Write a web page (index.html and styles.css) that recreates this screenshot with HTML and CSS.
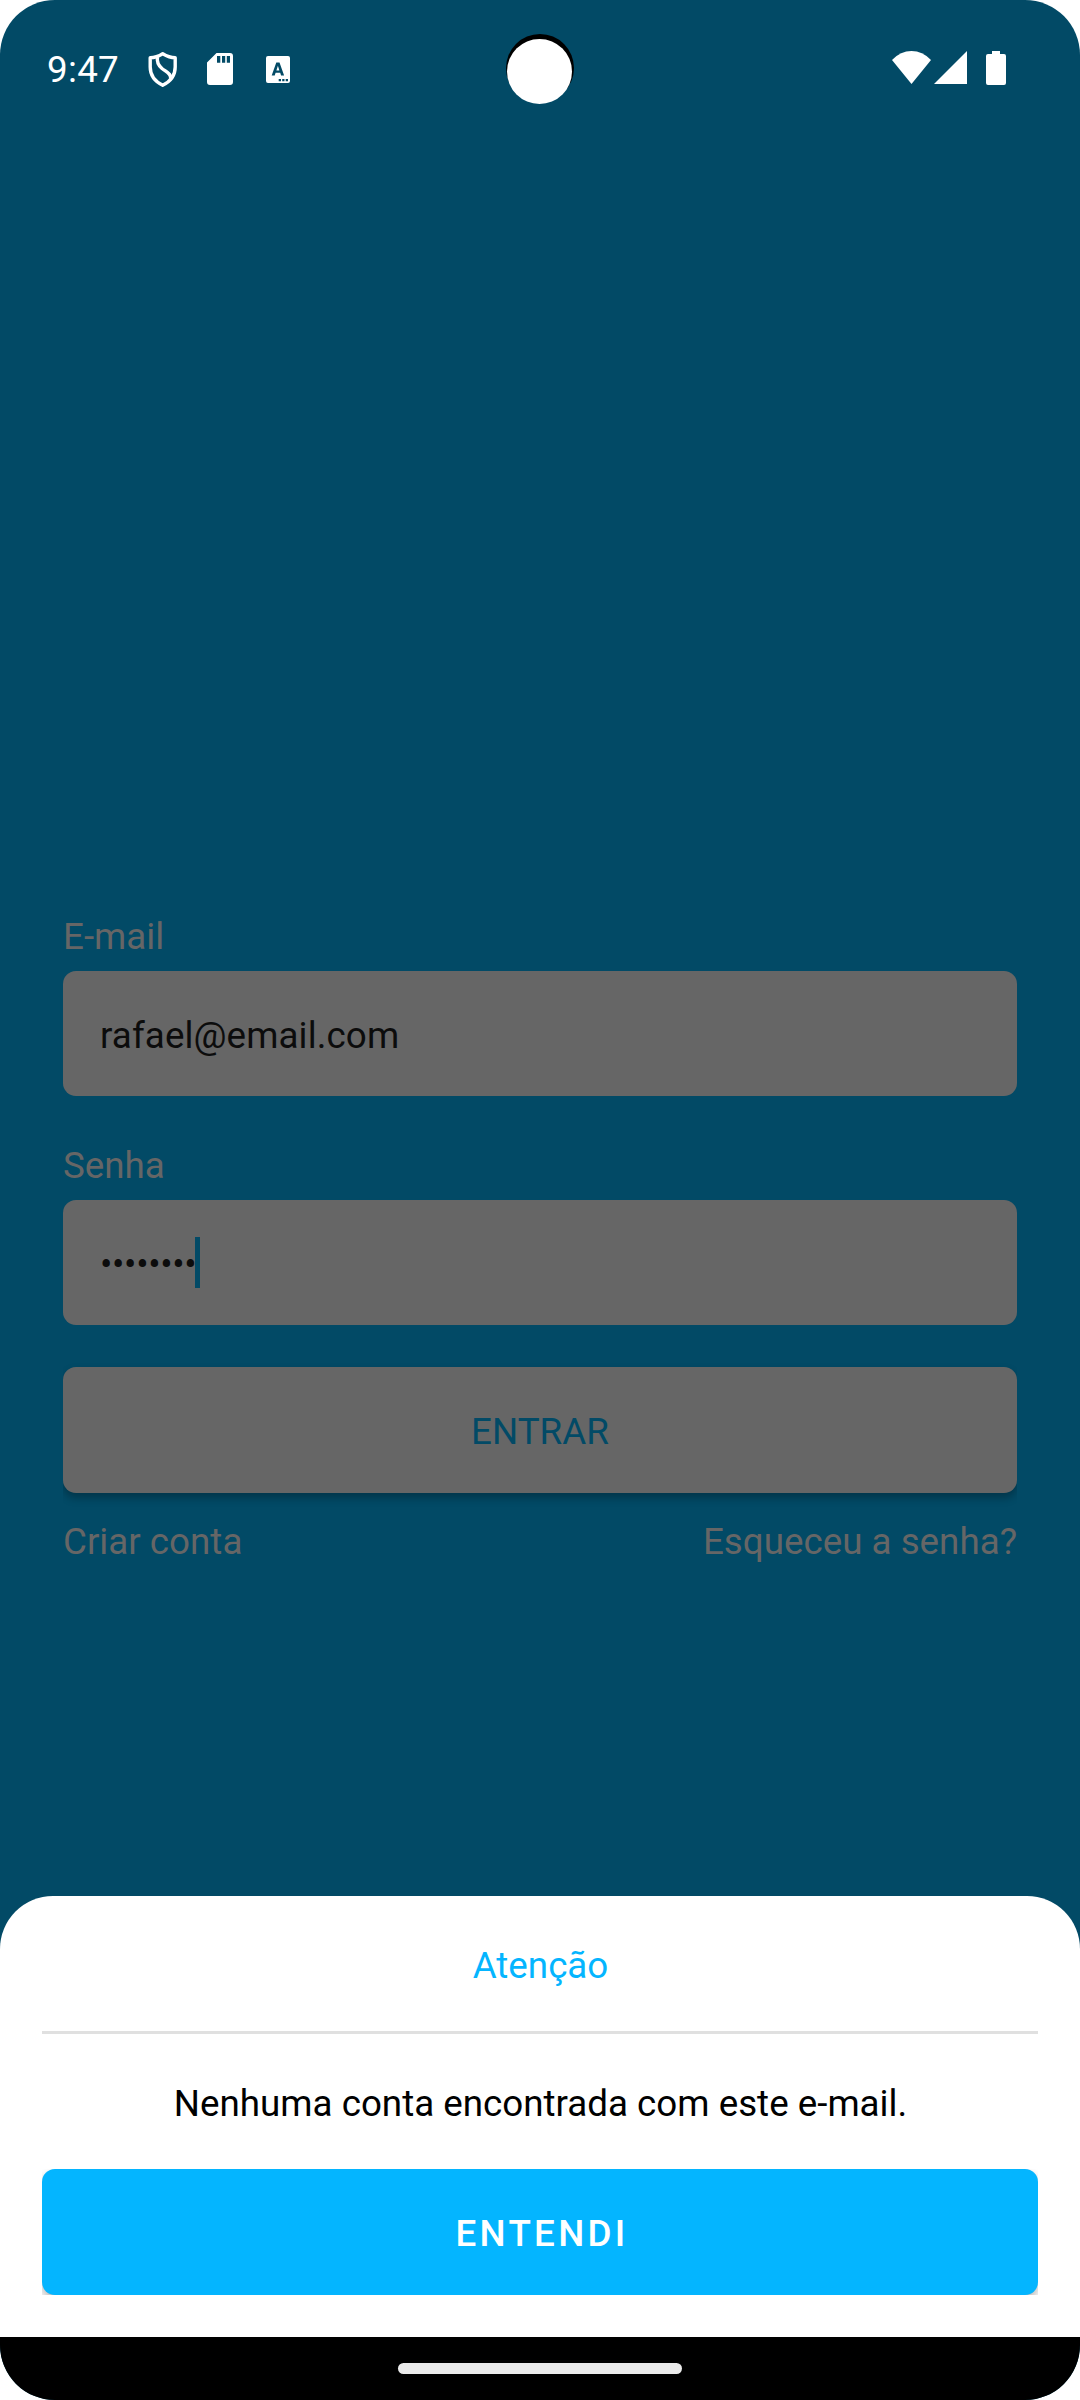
FILE: index.html
```html
<!DOCTYPE html>
<html lang="pt-BR">
<head>
<meta charset="utf-8">
<title>Login</title>
<link rel="stylesheet" href="styles.css">
</head>
<body>
<div class="screen">
  <header class="status-bar">
    <span class="clock">9:47</span>
    <svg class="icon-shield" viewBox="0 0 32 38"><g fill="none" stroke="#fff" stroke-width="3.4" stroke-linejoin="round"><path d="M15.7 3.7 C12 6 7 7.700 3.200 7.700 V17 C3.200 25 8 31.500 15.700 35.200 C23.400 31.500 28.200 25 28.200 17 V7.700 C24 7.700 19.500 6 15.700 3.700Z"/><path d="M10.500 7 C9.500 12.500 11.500 15.500 15 18.500 C19.500 22 25 24 23.500 29"/></g></svg>
    <svg class="icon-sd" viewBox="0 0 26 32"><path fill="#fff" fill-rule="evenodd" d="M9.500 0H23a3 3 0 0 1 3 3v26a3 3 0 0 1-3 3H3a3 3 0 0 1-3-3V9.500ZM10 3v6.700h3.300V3ZM15 3v6.700h3.200V3ZM19.800 3v6.700h3.200V3Z"/></svg>
    <svg class="icon-lang" viewBox="0 0 24 27"><path fill="#fff" fill-rule="evenodd" d="M2 0h20a2 2 0 0 1 2 2v23a2 2 0 0 1-2 2H2a2 2 0 0 1-2-2V2a2 2 0 0 1 2-2ZM10.300 6.500 5.700 19.500h3l.9-2.700h4.600l.9 2.700h3L13.500 6.500ZM11.900 9.800l1.500 4.700h-3ZM12.700 23v2.200H15V23ZM16.200 23v2.200h2.300V23ZM19.700 23v2.200H22V23Z"/></svg>
    <div class="camera"><div class="lens"></div></div>
    <div class="signals">
      <svg class="icon-wifi" viewBox="0 0 39 33"><path fill="#fff" d="M0 9Q8.500 0 19.500 0T39 9L19.500 33Z"/></svg>
      <svg class="icon-cell" viewBox="0 0 33 33"><path fill="#fff" d="M33 0V33H0Z"/></svg>
      <svg class="icon-battery" viewBox="0 0 20 34"><path fill="#fff" d="M6 0h8v3h4a2 2 0 0 1 2 2v27a2 2 0 0 1-2 2H2a2 2 0 0 1-2-2V5a2 2 0 0 1 2-2h4Z"/></svg>
    </div>
  </header>
  <main class="login">
    <div class="label">E-mail</div>
    <div class="field field-email">rafael@email.com</div>
    <div class="label label-next">Senha</div>
    <div class="field field-password"><span class="bullets">••••••••</span><span class="caret"></span></div>
    <div class="submit">ENTRAR</div>
    <nav class="links"><span>Criar conta</span><span>Esqueceu a senha?</span></nav>
  </main>
  <section class="sheet">
    <h2 class="sheet-title">Atenção</h2>
    <div class="divider"></div>
    <p class="message">Nenhuma conta encontrada com este e-mail.</p>
    <div class="confirm">ENTENDI</div>
  </section>
  <footer class="nav-bar"><div class="handle"></div></footer>
</div>
</body>
</html>
```
FILE: styles.css
```css
* { box-sizing: border-box; }
body { margin: 0; background: #fff; }
.screen {
  width: 1080px;
  height: 2400px;
  display: flex;
  flex-direction: column;
  background: #024a66;
  border-radius: 55px;
  overflow: hidden;
  font: 400 36.75px/43px Roboto, sans-serif;
}
svg { display: block; flex: none; }
.status-bar {
  position: relative;
  height: 136px;
  display: flex;
  align-items: flex-start;
  padding-left: 47px;
  color: #fff;
}
.clock { width: 100px; padding-top: 48px; letter-spacing: .3px; }
.icon-shield { width: 32px; height: 38px; margin-top: 50px; }
.icon-sd { width: 26px; height: 32px; margin: 53px 0 0 28px; }
.icon-lang { width: 24px; height: 27px; margin: 55.5px 0 0 33px; }
.camera {
  position: absolute;
  left: 506px;
  top: 34px;
  width: 68px;
  height: 68px;
  border-radius: 50%;
  background: #000;
}
.lens {
  width: 65px;
  height: 65px;
  margin: 5px 0 0 1px;
  border-radius: 50%;
  background: #fff;
}
.signals { display: flex; margin: 51px 74px 0 auto; }
.icon-wifi { width: 39px; height: 33px; }
.icon-cell { width: 33px; height: 33px; margin-left: 3px; }
.icon-battery { width: 20px; height: 34px; margin-left: 19px; }

.login { flex: 1; padding: 779px 63px 0; color: #666; }
.label { margin-bottom: 13px; }
.label-next { margin-top: 48px; }
.field {
  height: 125px;
  display: flex;
  align-items: center;
  padding: 3px 37px 0;
  border-radius: 13px;
  background: #666;
  color: #0c0c0c;
}
.field-email { letter-spacing: .1px; }
.field-password { padding-top: 0; }
.bullets { width: 95px; padding-top: 4px; letter-spacing: -.35px; white-space: nowrap; }
.caret { width: 5px; height: 51px; background: #024a66; }
.submit {
  height: 126px;
  margin-top: 42px;
  padding-top: 2px;
  display: flex;
  align-items: center;
  justify-content: center;
  border-radius: 13px;
  background: #666;
  color: #024a66;
  box-shadow: 0 5px 8px rgba(0, 0, 0, .28);
  clip-path: inset(-10px 0 -30px 0);
}
.links { display: flex; justify-content: space-between; margin-top: 27px; }

.sheet {
  height: 441px;
  padding: 48px 42px 0;
  border-radius: 53px 53px 0 0;
  background: #fff;
  text-align: center;
}
.sheet-title { margin: 0; padding-left: 1px; font: inherit; color: #04b5ff; }
.divider { height: 3px; margin-top: 44px; background: #e0e0e0; }
.message { margin: 48px 0 44px; padding-left: 1px; color: #000; }
.confirm {
  height: 126px;
  padding: 2px 0 0 4px;
  display: flex;
  align-items: center;
  justify-content: center;
  border-radius: 13px;
  background: #04b5ff;
  color: #fff;
  font-weight: 500;
  letter-spacing: 3.28px;
  box-shadow: 0 5px 8px rgba(0, 0, 0, .28);
  clip-path: inset(0);
}
.nav-bar { height: 63px; padding-top: 26px; background: #000; }
.handle { width: 284px; height: 11px; margin: 0 auto; border-radius: 6px; background: #ebebeb; }
```
